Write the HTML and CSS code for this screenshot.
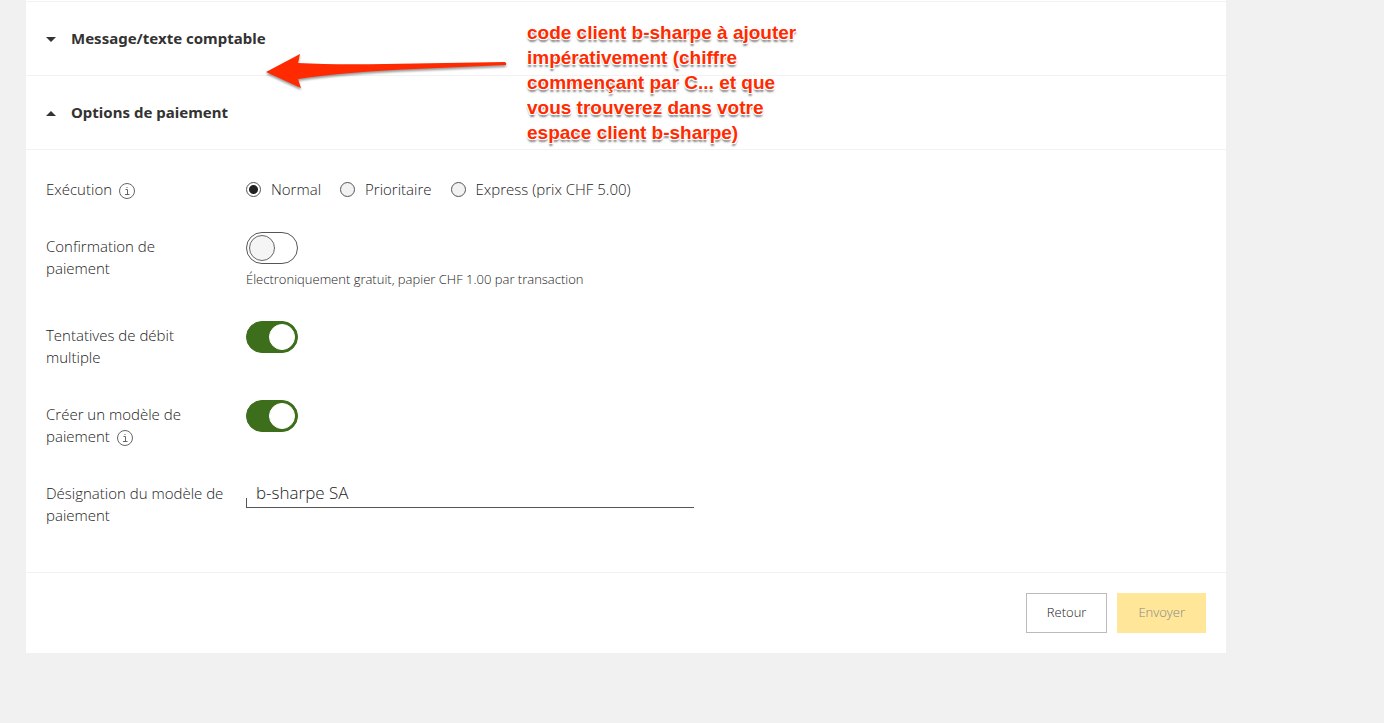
FILE: index.html
```html
<!DOCTYPE html>
<html lang="fr">
<head>
<meta charset="utf-8">
<meta name="viewport" content="width=device-width, initial-scale=1">
<title>Options de paiement</title>
<link rel="stylesheet" href="styles.css">
</head>
<body>
<main class="card">
  <h2 class="section"><button class="section-toggle" type="button" aria-expanded="false">
    <svg class="caret" viewBox="0 0 10 5" aria-hidden="true"><path d="M0 0H10L5 5Z"/></svg>Message/texte comptable</button></h2>
  <h2 class="section"><button class="section-toggle" type="button" aria-expanded="true">
    <svg class="caret" viewBox="0 0 10 5" aria-hidden="true"><path d="M0 5H10L5 0Z"/></svg>Options de paiement</button></h2>

  <form class="options" id="options">
    <div class="row" role="radiogroup" aria-labelledby="execution">
      <div class="label"><span id="execution">Exécution</span>
        <svg class="info" viewBox="0 0 16 16" role="img" aria-label="Information"><circle cx="8" cy="8" r="7.5"/><path d="M6.5 6.5H8.5V11.500M6 11.500H10.500M7.500 4.500H8.500"/></svg>
      </div>
      <div class="radios">
        <label class="choice"><input class="radio" type="radio" name="execution" checked>Normal</label>
        <label class="choice"><input class="radio" type="radio" name="execution">Prioritaire</label>
        <label class="choice"><input class="radio" type="radio" name="execution">Express (prix CHF 5.00)</label>
      </div>
    </div>
    <div class="row">
      <label class="label" for="confirmation">Confirmation de<br>paiement</label>
      <div class="field">
        <input class="switch" type="checkbox" id="confirmation" aria-describedby="confirmation-hint">
        <p class="hint" id="confirmation-hint">Électroniquement gratuit, papier CHF 1.00 par transaction</p>
      </div>
    </div>
    <div class="row">
      <label class="label" for="retry">Tentatives de débit multiple</label>
      <div class="field"><input class="switch" type="checkbox" id="retry" checked></div>
    </div>
    <div class="row">
      <label class="label" for="template">Créer un modèle de paiement
        <svg class="info" viewBox="0 0 16 16" role="img" aria-label="Information"><circle cx="8" cy="8" r="7.5"/><path d="M6.5 6.5H8.5V11.500M6 11.500H10.500M7.500 4.500H8.500"/></svg>
      </label>
      <div class="field"><input class="switch" type="checkbox" id="template" checked></div>
    </div>
    <div class="row">
      <label class="label" for="name">Désignation du modèle de paiement</label>
      <div class="field"><div class="text-box"><input class="text" type="text" id="name" value="b-sharpe SA"></div></div>
    </div>
  </form>

  <footer class="actions">
    <button class="button" type="button">Retour</button>
    <button class="button primary" type="submit" form="options" disabled>Envoyer</button>
  </footer>

  <aside class="note">
    <svg class="arrow" viewBox="0 0 246 44" aria-hidden="true"><path d="M1 21L35 3L33 12Q70 14 120 13L240 11Q242 12 241 14L150 18Q80 21 33 28L36 37Z"/></svg>
    <p class="note-text">code client b-sharpe à ajouter impérativement (chiffre commençant par C... et que vous trouverez dans votre espace client b-sharpe)</p>
  </aside>
</main>
</body>
</html>
```
FILE: styles.css
```css
*,
*::before {
  box-sizing: border-box;
}

body {
  margin: 0;
  padding: 0 26px 70px;
  background: #f1f1f1;
  color: #222;
  font: 300 15px/22px "Open Sans", "Noto Sans", sans-serif;
}

.card {
  position: relative;
  max-width: 1200px;
  padding-top: 1px;
  background: #fff;
}

.section {
  margin: 0;
  border-top: 1px solid #f2f2f2;
}

.section-toggle {
  display: flex;
  align-items: center;
  gap: 15px;
  width: 100%;
  height: 73px;
  padding: 0 20px 2px;
  border: 0;
  background: none;
  color: #333;
  font: 700 15px/22px "Noto Sans", "Open Sans", sans-serif;
  text-align: left;
}

.caret {
  width: 10px;
  height: 5px;
  margin-top: 4px;
  fill: #333;
}

.options {
  display: flex;
  flex-direction: column;
  gap: 32px;
  padding: 25px 20px 46px;
  border-top: 1px solid #f2f2f2;
}

.row {
  display: grid;
  grid-template-columns: 180px minmax(0, 1fr);
  column-gap: 20px;
}

.label {
  padding-top: 3px;
}

.info {
  width: 16px;
  height: 16px;
  margin-left: 3px;
  vertical-align: -4px;
  fill: none;
  stroke: #666;
}

.radios {
  display: flex;
  flex-wrap: wrap;
  gap: 19px;
  padding-top: 3px;
}

.choice {
  display: flex;
  align-items: center;
  gap: 10px;
}

.radio {
  appearance: none;
  width: 15px;
  height: 15px;
  margin: 0;
  border: 1px solid #555;
  border-radius: 50%;
  background: #f2f2f2;
}

.radio:checked {
  background: radial-gradient(circle, #222 4px, #fff 5px);
}

.switch {
  appearance: none;
  display: flex;
  align-items: center;
  width: 52px;
  height: 32px;
  margin: 0;
  padding: 0 2px;
  border: 1px solid #555;
  border-radius: 16px;
  background: #fff;
}

.switch::before {
  content: "";
  width: 26px;
  height: 26px;
  border: 1px solid #666;
  border-radius: 50%;
  background: #f5f5f5;
}

.switch:checked {
  justify-content: flex-end;
  border-color: #3c6e1b;
  background: #3c6e1b;
}

.switch:checked::before {
  border-color: #fff;
  background: #fff;
}

.hint {
  margin: 6px 0 0;
  font-size: 13px;
  line-height: 19px;
}

.text-box {
  display: flex;
  max-width: 448px;
  height: 29px;
  border-bottom: 1px solid #555;
  background: linear-gradient(#555, #555) left bottom / 1px 9px no-repeat;
}

.text {
  width: 100%;
  padding: 0 10px;
  border: 0;
  background: none;
  color: #222;
  font: 300 17px/24px "Open Sans", "Noto Sans", sans-serif;
}

.actions {
  display: flex;
  justify-content: flex-end;
  gap: 10px;
  padding: 20px;
  border-top: 1px solid #f2f2f2;
}

.button {
  height: 40px;
  padding: 0 20px 2px;
  border: 1px solid #bbb;
  background: #fff;
  color: #222;
  font: 300 13px/20px "Open Sans", "Noto Sans", sans-serif;
}

.primary {
  border-color: #ffe699;
  background: #ffe699;
  color: #888;
}

.note {
  position: absolute;
  top: 20px;
  left: 239px;
  display: flex;
  gap: 16px;
  pointer-events: none;
}

.arrow {
  width: 246px;
  height: 44px;
  margin-top: 31px;
  fill: #ff2a00;
  filter: drop-shadow(0 2px 1px rgb(0 0 0 / 40%));
}

.note-text {
  width: 280px;
  margin: 0;
  color: #ff2a00;
  font: 700 19px/25px "Liberation Sans", Arial, sans-serif;
  text-shadow: 1px 0 #fff, -1px 0 #fff, 0 1px #fff, 0 -1px #fff, 1px 1px #fff, -1px 1px #fff, 0 3px 2px rgb(0 0 0 / 50%);
}
```
